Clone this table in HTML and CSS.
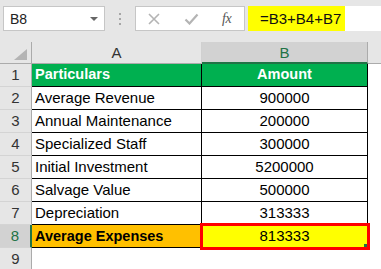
FILE: index.html
```html
<!DOCTYPE html>
<html>
<head>
<meta charset="utf-8">
<link rel="stylesheet" href="styles.css">
</head>
<body>
<div class="app">
  <div class="toolbar">
    <div class="namebox"><span class="ref">B8</span><span class="caret"></span></div>
    <div class="dots"><i></i><i></i><i></i></div>
    <div class="buttons">
      <svg class="ico-x" width="12" height="12" viewBox="0 0 12 12"><path d="M1 1L11 11M11 1L1 11" stroke="#b4b4b4" stroke-width="1.6" fill="none"/></svg>
      <svg class="ico-check" width="15" height="12" viewBox="0 0 15 12"><path d="M1.5 6.5L5.5 10.5L13.5 1.5" stroke="#b4b4b4" stroke-width="2.2" fill="none"/></svg>
      <span class="fx">fx</span>
    </div>
    <div class="formula"><span class="formula-text">=B3+B4+B7</span></div>
  </div>
  <div class="sheet">
    <div class="corner"><span class="tri"></span></div>
    <div class="colhead">A</div>
    <div class="colhead sel">B</div>
    <div class="colhead rest"></div>

    <div class="rowhead">1</div>
    <div class="cell a head">Particulars</div>
    <div class="cell b head">Amount</div>
    <div class="blank"></div>

    <div class="rowhead">2</div>
    <div class="cell a">Average Revenue</div>
    <div class="cell b">900000</div>
    <div class="blank"></div>

    <div class="rowhead">3</div>
    <div class="cell a">Annual Maintenance</div>
    <div class="cell b">200000</div>
    <div class="blank"></div>

    <div class="rowhead">4</div>
    <div class="cell a">Specialized Staff</div>
    <div class="cell b">300000</div>
    <div class="blank"></div>

    <div class="rowhead">5</div>
    <div class="cell a">Initial Investment</div>
    <div class="cell b">5200000</div>
    <div class="blank"></div>

    <div class="rowhead">6</div>
    <div class="cell a">Salvage Value</div>
    <div class="cell b">500000</div>
    <div class="blank"></div>

    <div class="rowhead">7</div>
    <div class="cell a">Depreciation</div>
    <div class="cell b">313333</div>
    <div class="blank"></div>

    <div class="rowhead sel">8</div>
    <div class="cell a total">Average Expenses</div>
    <div class="cell b result">813333<span class="handle"></span></div>
    <div class="blank"></div>

    <div class="rowhead last">9</div>
    <div class="empty"></div>
    <div class="empty"></div>
    <div class="blank"></div>
  </div>
</div>
</body>
</html>
```
FILE: styles.css
```css
* { box-sizing: border-box; }
html, body { margin: 0; padding: 0; }
body {
  width: 381px;
  height: 269px;
  overflow: hidden;
  background: #ffffff;
  font-family: "Liberation Sans", Arial, sans-serif;
}
.app { width: 381px; height: 269px; }

.toolbar {
  height: 42px;
  background: #e6e6e6;
  display: flex;
  align-items: flex-start;
  padding: 6px 0 0 3px;
}
.namebox {
  width: 102px;
  height: 25px;
  background: #fff;
  border: 1px solid #c6c6c6;
  display: flex;
  align-items: center;
  justify-content: space-between;
  padding: 0 6px 0 6px;
}
.ref { font-size: 14px; color: #222; }
.caret {
  width: 0; height: 0;
  border-left: 4px solid transparent;
  border-right: 4px solid transparent;
  border-top: 4px solid #666;
  margin-top: 1px;
}
.dots {
  width: 30px;
  height: 25px;
  display: flex;
  flex-direction: column;
  align-items: center;
  justify-content: center;
  gap: 3px;
}
.dots i { display: block; width: 2px; height: 2px; background: #a6a6a6; }
.buttons {
  width: 110px;
  height: 25px;
  background: #fff;
  border: 1px solid #c6c6c6;
  display: flex;
  align-items: center;
  padding-left: 12px;
}
.ico-x { margin-right: 24px; }
.ico-check { margin-right: 23px; margin-top: 1px; }
.fx {
  font-family: "Liberation Serif", "Times New Roman", serif;
  font-style: italic;
  font-size: 14px;
  color: #555;
  letter-spacing: -0.5px;
}
.formula {
  flex: 1;
  height: 25px;
  margin-left: 3px;
  background: linear-gradient(to right, #ffff00 0, #ffff00 97px, #ffffff 97px);
  display: flex;
  align-items: center;
  padding-left: 12px;
}
.formula-text { font-size: 15px; color: #111; }

.sheet {
  display: grid;
  grid-template-columns: 32px 170px 166px 13px;
  grid-template-rows: 22px repeat(8, 23px) 21px;
}
.corner {
  background: #e6e6e6;
  border-right: 1px solid #ababab;
  border-bottom: 1px solid #ababab;
  position: relative;
}
.tri {
  position: absolute;
  right: 4px;
  bottom: 3px;
  width: 0; height: 0;
  border-left: 13px solid transparent;
  border-bottom: 11px solid #b4b4b4;
}
.colhead {
  background: #e6e6e6;
  border-right: 1px solid #d0d0d0;
  border-bottom: 1px solid #ababab;
  font-size: 15px;
  color: #333;
  text-align: center;
  line-height: 21px;
}
.colhead.sel {
  background: #d2d2d2;
  color: #217346;
  border-bottom: 2px solid #217346;
  border-right: 1px solid #ababab;
}
.colhead.rest { border-right: none; }

.rowhead {
  background: #e6e6e6;
  border-right: 1px solid #ababab;
  border-bottom: 1px solid #d4d4d4;
  font-size: 15px;
  color: #333;
  text-align: center;
  line-height: 22px;
}
.rowhead.sel {
  background: #d2d2d2;
  color: #217346;
  border-right: 2px solid #217346;
}
.rowhead.last { border-bottom: none; }

.cell {
  border-right: 1px solid #000;
  border-bottom: 1px solid #000;
  font-size: 15px;
  color: #000;
  line-height: 22px;
  white-space: nowrap;
  overflow: visible;
}
.cell.a { padding-left: 3px; }
.cell.b { text-align: center; }
.cell.head {
  background: #00b050;
  color: #fff;
  font-weight: bold;
  font-size: 14.5px;
  line-height: 20px;
}
.cell.total {
  background: #ffc000;
  font-weight: bold;
  font-size: 14.5px;
}
.cell.result {
  background: #ffff00;
  position: relative;
  outline: 3px solid #ff0000;
  outline-offset: -1px;
  z-index: 1;
}
.handle {
  position: absolute;
  right: 0;
  bottom: 0;
  width: 3px;
  height: 3px;
  background: #217346;
}
.blank { background: #fff; }
.empty { background: #fff; }
```
